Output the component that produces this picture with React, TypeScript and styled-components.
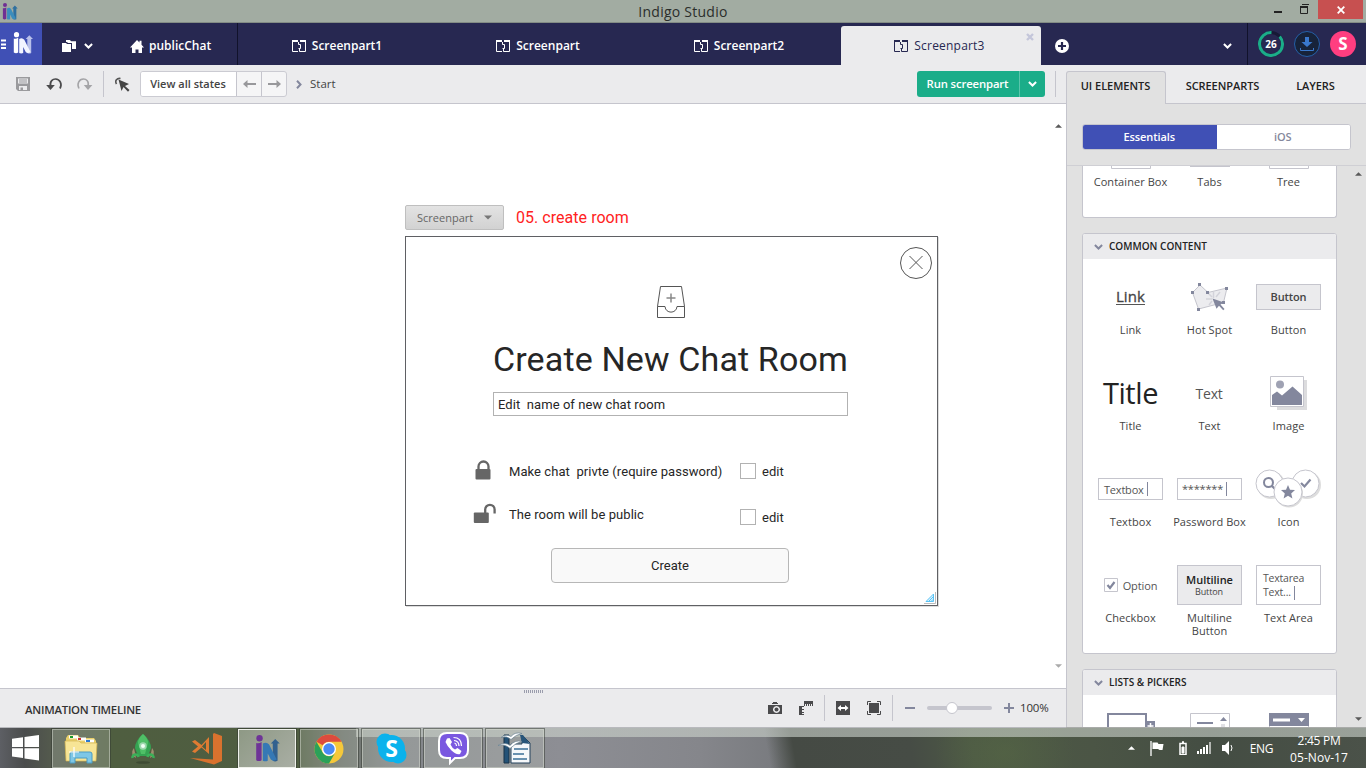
import React from 'react';
import styled, { createGlobalStyle, css } from 'styled-components';

const Global = createGlobalStyle`
  * { box-sizing: border-box; }
  body { margin: 0; overflow: hidden; }
  svg { display: block; flex: none; }
  button { font: inherit; color: inherit; padding: 0; margin: 0; }
`;

const ui = `'Open Sans', 'Noto Sans', sans-serif`;
const navy = '#272851';
const line = '#c5c5cd';
const slate = '#83879d';

const Desktop = styled.div`
  width: 1366px;
  height: 768px;
  display: flex;
  flex-direction: column;
  font: 11px/13px ${ui};
  color: #444;
  background: #fff;
  overflow: hidden;
`;

/* ---------- window title ---------- */
const TitleBar = styled.header`
  height: 23px;
  flex: none;
  display: grid;
  grid-template-columns: 1fr auto 1fr;
  background: #a2aca2;
  border-bottom: 1px solid #838c85;
`;
const AppMark = styled.div`
  padding: 3px 0 0 2px;
`;
const WindowTitle = styled.div`
  font-size: 14px;
  line-height: 23px;
  letter-spacing: 0.25px;
  color: #2b2e2b;
`;
const WindowButtons = styled.div`
  display: flex;
  justify-content: flex-end;
  padding-right: 3px;
`;
const CloseWindow = styled.div`
  width: 45px;
  height: 19px;
  margin-left: 9px;
  background: #c75050;
  display: grid;
  place-items: center;
`;

/* ---------- navigation ---------- */
const Nav = styled.nav`
  height: 42px;
  flex: none;
  display: flex;
  background: ${navy};
  color: #fff;
  font-weight: 600;
  font-size: 12px;
  line-height: 16px;
`;
const LogoBox = styled.div`
  width: 42px;
  background: #4050b5;
  display: flex;
  padding: 9px 0 0 1px;
`;
const Home = styled.div`
  width: 196px;
  border-right: 1px solid #11122b;
  display: flex;
  align-items: center;
  padding: 4px 0 0 20px;
`;
const HomeName = styled.span`
  margin-left: 5px;
`;
const NavTab = styled.div<{ $active?: boolean }>`
  position: relative;
  width: 201px;
  display: flex;
  align-items: center;
  justify-content: center;
  gap: 6px;
  padding: 3px 3px 0 0;
  ${p => p.$active && css`
    width: 200px;
    margin-top: 3px;
    padding-top: 0;
    background: #ebebed;
    color: ${navy};
    font-weight: 400;
    letter-spacing: 0.2px;
    border-radius: 3px 3px 0 0;
  `}
`;
const TabClose = styled.span`
  position: absolute;
  right: 7px;
  top: 7px;
`;
const NavTail = styled.div`
  flex: 1;
  display: flex;
  justify-content: space-between;
  align-items: center;
  padding: 3px 15px 0 14px;
  border-right: 1px solid #11122b;
`;
const Account = styled.div`
  width: 118px;
  display: flex;
  align-items: center;
  gap: 10px;
  padding-left: 10px;
`;
const Avatar = styled.div`
  width: 26px;
  height: 26px;
  border-radius: 50%;
  background: #ff3e80;
  font: 700 17px/26px ${ui};
  text-align: center;
`;

/* ---------- work area ---------- */
const Work = styled.div`
  height: 663px;
  flex: none;
  display: flex;
`;
const Editor = styled.main`
  width: 1066px;
  display: flex;
  flex-direction: column;
`;
const Toolbar = styled.div`
  height: 39px;
  flex: none;
  display: flex;
  align-items: center;
  background: #ebebed;
  border-bottom: 1px solid ${line};
  padding: 0 10px 0 15px;
`;
const Divider = styled.i<{ $l: number; $r: number }>`
  width: 1px;
  height: 26px;
  background: ${line};
  margin: 0 ${p => p.$r}px 0 ${p => p.$l}px;
`;
const StateGroup = styled.div`
  display: flex;
  height: 26px;
  margin-left: 10px;
  border: 1px solid #cbcbd2;
  border-radius: 3px;
  background: #f5f5f6;
  overflow: hidden;
`;
const ViewStates = styled.button`
  width: 95px;
  border: 0;
  padding: 0 1px 2px 0;
  background: #fff;
  font-weight: 600;
`;
const Step = styled.span`
  width: 25px;
  border-left: 1px solid ${line};
  display: grid;
  place-items: center;
`;
const Start = styled.span`
  margin: 0 0 2px 8px;
  font-size: 11.500px;
`;
const RunGroup = styled.div`
  margin-left: auto;
  display: flex;
  width: 128px;
  height: 26px;
  border-radius: 3px;
  background: #1bad89;
  color: #fff;
`;
const Run = styled.button`
  width: 102px;
  border: 0;
  padding: 0 1px 2px 0;
  background: none;
  font-weight: 600;
  font-size: 11.3px;
  letter-spacing: -0.12px;
`;
const RunMenu = styled.span`
  flex: 1;
  border-left: 1px solid #5bc5ac;
  display: grid;
  place-items: center;
`;

/* ---------- canvas ---------- */
const Canvas = styled.section`
  flex: 1;
  position: relative;
  background: #fff;
  padding: 101px 0 0 405px;
`;
const EdgeArrow = styled.span<{ $bottom?: boolean }>`
  position: absolute;
  right: 4px;
  ${p => (p.$bottom ? 'bottom: 20px;' : 'top: 20px;')}
`;
const BoardHead = styled.div`
  display: flex;
  align-items: center;
  height: 25px;
  margin-bottom: 6px;
`;
const BoardType = styled.div`
  width: 99px;
  height: 25px;
  display: flex;
  align-items: center;
  gap: 11px;
  padding: 0 0 1px 11px;
  border: 1px solid #bfbfbf;
  border-radius: 2px;
  background: linear-gradient(#e3e3e3, #d2d2d2);
  color: #666;
`;
const BoardName = styled.span`
  margin-left: 12px;
  font: 16px/20px Roboto, sans-serif;
  color: #f22;
  letter-spacing: 0.04px;
`;
const Board = styled.div`
  position: relative;
  width: 533px;
  height: 370px;
  border: 1px solid #5f6064;
  box-shadow: 1px 1px 0 #ddd;
  display: flex;
  flex-direction: column;
  padding: 49px 0 0 67px;
  font: 13px/16px Roboto, sans-serif;
  letter-spacing: 0.06px;
  color: #262626;
`;
const CloseDialog = styled.span`
  position: absolute;
  right: 5px;
  top: 10px;
`;
const ResizeGrip = styled.span`
  position: absolute;
  right: 1px;
  bottom: 1px;
`;
const InboxMark = styled.div`
  margin-left: 184px;
`;
const Heading = styled.h1`
  margin: 20px 0 12px 20px;
  font: 400 34px/42px Roboto, sans-serif;
  letter-spacing: 0.14px;
  white-space: nowrap;
`;
const RoomInput = styled.div`
  width: 355px;
  height: 24px;
  margin-left: 20px;
  border: 1px solid #b2b2b2;
  padding: 4px;
  white-space: pre;
`;
const Choices = styled.div`
  margin-top: 43px;
  display: flex;
  flex-direction: column;
  gap: 19px;
`;
const Choice = styled.div`
  display: grid;
  grid-template-columns: 36px 231px auto;
  align-items: center;
  height: 24px;
  white-space: pre;
`;
const ChoiceText = styled.span`
  padding-top: 2px;
`;
const Tick = styled.label<{ $drop?: number }>`
  display: flex;
  align-items: center;
  gap: 6px;
  padding-top: ${p => p.$drop || 0}px;
`;
const Box = styled.i`
  width: 16px;
  height: 16px;
  border: 1px solid #b2b2b2;
`;
const TickText = styled.span`
  padding-top: 1px;
`;
const CreateButton = styled.button`
  width: 238px;
  height: 35px;
  margin: 22px 0 0 78px;
  border: 1px solid #b7b7b7;
  border-radius: 4px;
  background: #f9f9f9;
`;

/* ---------- timeline ---------- */
const Timeline = styled.footer`
  position: relative;
  height: 40px;
  flex: none;
  display: flex;
  align-items: center;
  border-top: 1px solid ${line};
  border-bottom: 1px solid #b8b9bd;
  background: #ebebed;
  padding-left: 25px;
  color: #333;
`;
const TimelineName = styled.span`
  padding-top: 2px;
  margin-right: auto;
  font-weight: 600;
  font-size: 11.4px;
  letter-spacing: -0.25px;
`;
const Grip = styled.i`
  position: absolute;
  left: 524px;
  top: 1px;
  width: 20px;
  height: 3px;
  background: repeating-linear-gradient(90deg, #9a9cac 0 1px, transparent 1px 2px);
`;
const Zoom = styled.div`
  display: flex;
  align-items: center;
  width: 161px;
`;
const Track = styled.i`
  position: relative;
  width: 65px;
  height: 4px;
  margin: 0 12px;
  border-radius: 2px;
  background: #c5c5cd;
`;
const Knob = styled.i`
  position: absolute;
  left: 19px;
  top: -4px;
  width: 12px;
  height: 12px;
  border-radius: 50%;
  border: 1px solid #c5c5cd;
  background: #fff;
`;
const Percent = styled.span`
  margin: 0 0 2px 6px;
  font-size: 11.5px;
  letter-spacing: -0.2px;
`;

/* ---------- right panel ---------- */
const Panel = styled.aside`
  width: 300px;
  display: flex;
  flex-direction: column;
  background: #e1e1e1;
  border-bottom: 1px solid #a9aba9;
`;
const PanelTabs = styled.div`
  height: 39px;
  flex: none;
  display: flex;
  align-items: flex-end;
  background: #ebebed;
  box-shadow: inset 0 -1px ${line};
  color: #222;
  font-weight: 600;
`;
const PanelTab = styled.div<{ $w: number; $active?: boolean; $sp?: number }>`
  width: ${p => p.$w}px;
  height: 33px;
  line-height: 29px;
  padding-right: 1px;
  text-align: center;
  letter-spacing: ${p => p.$sp || 0}px;
  ${p => p.$active && css`
    line-height: 27px;
    background: #e1e1e1;
    border: 1px solid ${line};
    border-bottom: 0;
    border-radius: 3px 3px 0 0;
  `}
`;
const PanelBody = styled.div`
  flex: 1;
  min-height: 0;
  display: flex;
  flex-direction: column;
  border-left: 1px solid ${line};
`;
const Library = styled.div`
  height: 62px;
  flex: none;
  padding: 20px 15px 0;
  border-bottom: 1px solid #cfcfd4;
`;
const Segmented = styled.div`
  display: flex;
  height: 26px;
  border: 1px solid ${line};
  border-radius: 3px;
  overflow: hidden;
  background: #fff;
`;
const Segment = styled.span<{ $on?: boolean }>`
  flex: 1;
  text-align: center;
  line-height: 24px;
  padding-right: 1px;
  font-weight: 600;
  letter-spacing: -0.1px;
  color: ${p => (p.$on ? '#fff' : '#85889c')};
  background: ${p => (p.$on ? '#4050b5' : '#fff')};
`;
const Shelf = styled.div`
  position: relative;
  flex: 1;
  min-height: 0;
  overflow: hidden;
  padding-left: 15px;
`;
const ShelfArrow = styled.span<{ $bottom?: boolean }>`
  position: absolute;
  right: 4px;
  ${p => (p.$bottom ? 'bottom: 6px;' : 'top: 6px;')}
`;
const Card = styled.section<{ $h: number; $clipped?: boolean }>`
  width: 255px;
  height: ${p => p.$h}px;
  margin-bottom: 15px;
  background: #fff;
  border: 1px solid ${line};
  border-radius: 3px;
  overflow: hidden;
  ${p => p.$clipped && css`
    border-top: 0;
    border-radius: 0 0 3px 3px;
  `}
`;
const CardHead = styled.h2`
  height: 25px;
  margin: 0;
  display: flex;
  align-items: center;
  gap: 6px;
  padding-left: 11px;
  background: #ebebed;
  font-size: 10px;
  font-weight: 600;
  letter-spacing: 0.02px;
  color: #222;
`;
const Items = styled.div`
  display: grid;
  grid-template-columns: repeat(3, 79px);
  padding-left: 8px;
`;
const Item = styled.div<{ $h?: number }>`
  height: ${p => p.$h || 96}px;
  display: flex;
  flex-direction: column;
  align-items: center;
  text-align: center;
`;
const Thumb = styled.div<{ $h?: number; $top?: number }>`
  height: ${p => p.$h || 48}px;
  margin: ${p => (p.$top === undefined ? 14 : p.$top)}px 0 2px;
  display: flex;
  align-items: center;
  justify-content: center;
`;
const Label = styled.span`
  font-size: 11px;
  line-height: 13px;
  letter-spacing: 0.06px;
`;
const LowLabel = styled(Label)`
  margin-top: 4px;
`;
const LinkSample = styled.span`
  margin-bottom: 1px;
  font-size: 15px;
  line-height: 16px;
  letter-spacing: 0.1px;
  color: #444;
  -webkit-text-stroke: 0.3px #444;
  border-bottom: 1px solid #555;
`;
const ButtonSample = styled.span<{ $h: number }>`
  width: 65px;
  height: ${p => p.$h}px;
  display: flex;
  flex-direction: column;
  justify-content: center;
  border: 1px solid ${line};
  background: #ebebed;
  font-weight: 600;
  line-height: 12px;
  letter-spacing: -0.12px;
  small { font-size: 9px; font-weight: 400; line-height: 11px; padding-right: 1px; }
`;
const Strong = styled.b`
  color: #222;
  font-weight: 600;
  letter-spacing: -0.02px;
`;
const TitleSample = styled.span`
  font-size: 29px;
  line-height: 30px;
  letter-spacing: -0.4px;
  color: #222;
`;
const TextSample = styled.span`
  font-size: 14px;
  letter-spacing: -0.2px;
  padding-right: 1px;
  color: #555;
`;
const FieldSample = styled.span<{ $h: number }>`
  width: 65px;
  height: ${p => p.$h}px;
  display: flex;
  align-items: center;
  padding-left: 5px;
  border: 1px solid ${line};
  text-align: left;
  color: #555;
  letter-spacing: -0.2px;
  white-space: nowrap;
`;
const Stars = styled.span`
  padding-bottom: 2px;
  margin-left: -1px;
`;
const Area = styled.span`
  font-size: 10.5px;
  line-height: 14px;
  padding: 1px 0 0 1px;
`;
const Caret = styled.i`
  display: inline-block;
  width: 1px;
  height: 14px;
  margin-left: 3px;
  background: ${slate};
  vertical-align: middle;
`;
const OptionSample = styled.span`
  display: flex;
  align-items: center;
  gap: 5px;
  color: #555;
  letter-spacing: -0.1px;
`;

/* ---------- taskbar ---------- */
const Taskbar = styled.div`
  height: 40px;
  flex: none;
  display: flex;
  background:
    linear-gradient(rgba(205, 212, 205, 0.6), rgba(205, 212, 205, 0.6)) 356px 0 / 1010px 9px no-repeat,
    radial-gradient(ellipse 70px 60px at 1005px 25px, rgba(88, 108, 68, 0.45), transparent),
    linear-gradient(80deg, transparent 759px, #454a44 785px, #464c45 900px, #4d5945 960px, #4b5545 1080px, #444d43 1200px, #4b5249 1350px),
    linear-gradient(90deg, #5d5f64 0, #4a4c4c 25px, #53594d 50px, #4f5e40 110px, #4f5d41 300px, #6b7169 340px, #83868a 400px, #8d8e94 560px, #85868b 700px, #77797d 790px);
  color: #fff;
`;
const StartButton = styled.div`
  width: 52px;
  padding: 7px 0 0 12px;
`;
const Task = styled.div<{ $mode?: 'open' | 'active' }>`
  width: 58px;
  height: 39px;
  margin: 1px 4px 0 0;
  display: grid;
  place-items: center;
  ${p => p.$mode && css`
    border: 1px solid ${p.$mode === 'active' ? '#eef0ea' : 'rgba(215,220,210,.5)'};
    background: ${p.$mode === 'active'
      ? 'linear-gradient(135deg, #8e9985, #a9aea4)'
      : 'rgba(195,202,190,.28)'};
    box-shadow: 0 0 0 1px rgba(50, 55, 48, 0.5);
  `}
`;
const Tray = styled.div`
  margin-left: auto;
  display: flex;
  align-items: center;
  font-size: 12px;
  padding-right: 18px;
`;
const Language = styled.span`
  margin: 0 17px 0 16px;
  letter-spacing: -0.4px;
`;
const Clock = styled.div`
  width: 58px;
  padding-top: 2px;
  text-align: center;
  line-height: 17px;
  letter-spacing: -0.3px;
  white-space: nowrap;
`;
const DateText = styled.span`
  letter-spacing: 0.05px;
`;

/* ---------- drawings ---------- */
const Chevron = ({ w = 10, h = 6, c = '#fff', sw = 2.2 }: { w?: number; h?: number; c?: string; sw?: number }) => (
  <svg width={w} height={h} viewBox="0 0 10 6" fill="none" stroke={c} strokeWidth={sw}>
    <path d="M1 .8 5 4.7 9 .8" />
  </svg>
);
const Triangle = ({ up, c = '#5a5a5a', w = 7, h = 4 }: { up?: boolean; c?: string; w?: number; h?: number }) => (
  <svg width={w} height={h} viewBox="0 0 8 4" fill={c}>
    <path d={up ? 'M0 4 4 0 8 4z' : 'M0 0h8L4 4z'} />
  </svg>
);
const IndigoMark = ({ w, h, a, b, c }: { w: number; h: number; a: string; b: string; c: string }) => (
  <svg width={w} height={h} viewBox="0 0 20 22" fill="none">
    <path d="M.8 6.500q2 .8 4.400-.8V20.500q-2.200 1.500-4.400 0z" fill={a} />
    <circle cx="3.500" cy="2.700" r="2.600" fill={a} />
    <path d="M14.300 21V7h-1.600L16.300 3.300 20 7h-1.800v14q-2 1-3.900 0z" fill={c} />
    <path d="M6.200 7q3-1.800 5.100.8L17.500 20q-3 1.800-4.800 0L10.200 15V21q-2 .9-4 0z" fill={b} />
  </svg>
);
const PartIcon = ({ c = '#fff' }: { c?: string }) => (
  <svg width="14" height="12" viewBox="0 0 14 12" fill="none" stroke={c}>
    <path d="M0 1h6M8 1h6" strokeWidth="2" />
    <path d="M.5 1v10.500H6M13.500 1v10.500H7.500V8.500M6.500 2v2.500h2v4h-2" />
  </svg>
);
const HotSpot = () => (
  <svg width="38" height="29" viewBox="0 0 38 29">
    <path d="M1.500 9.500 9 2l8 7.500L36 5l-3.500 14.500L7.500 26z" fill="#ececef" stroke={line} />
    <path d="M22.500 9v6M15 16h6M29 9l-4 5M17 10l4 4M18 22l3-4" stroke="#d3d3da" strokeWidth="1.500" />
    <g fill={slate}>
      <path d="M0 8h3v3H0zM7 0h3v3H7zM15 8h3v3h-3zM34 4h3v3h-3zM31 18h3v3h-3zM6 25h3v3H6z" />
      <path d="M21.500 15.500 33 19.500l-3.500 2 4 4.500-1.300 1.200-4.200-4.500-2.500 3z" />
    </g>
  </svg>
);
const Picture = () => (
  <svg width="37" height="34" viewBox="0 0 37 34">
    <path d="M7 4h30v30H7z" fill="#dcdcde" />
    <path d="M.5.5h33v30H.5z" fill="#fff" stroke={line} />
    <circle cx="10" cy="8.500" r="4" fill="#9fa2b3" />
    <path d="M2 29V19l5-3.500 5 4 10.500-9L32 19v10z" fill={slate} />
  </svg>
);
const IconTrio = () => (
  <svg width="67" height="40" viewBox="0 0 67 40">
    <g fill="#ddd"><circle cx="16" cy="16" r="14" /><circle cx="52" cy="16" r="14" /></g>
    <g fill="#fff" stroke={line}><circle cx="14.500" cy="14.500" r="13.500" /><circle cx="50.500" cy="14.500" r="13.500" /></g>
    <circle cx="13.500" cy="13.500" r="4.500" fill="none" stroke={slate} strokeWidth="2" />
    <path d="m16.500 16.500 3.500 3.500M46 14l3.500 3.500 6-7" fill="none" stroke={slate} strokeWidth="2.200" />
    <circle cx="34" cy="24.500" r="14" fill="#ddd" />
    <circle cx="33" cy="23" r="14" fill="#fff" stroke={line} />
    <path d="m33 16 2 4.700 5 .4-3.800 3.300 1.200 5-4.400-2.700-4.400 2.700 1.200-5-3.800-3.300 5-.4z" fill={slate} />
  </svg>
);
const Tool = ({ children, w = 14, h = 14, c = '#4a4a4c' }: { children: React.ReactNode; w?: number; h?: number; c?: string }) => (
  <svg width={w} height={h} viewBox={`0 0 ${w} ${h}`} fill={c}>{children}</svg>
);
const Space = styled.i<{ $w: number }>`
  width: ${p => p.$w}px;
  flex: none;
`;

const LabeledItem = ({ name, children }: { name: string; children: React.ReactNode }) => (
  <Item><Thumb>{children}</Thumb><Label>{name}</Label></Item>
);

function Navigation() {
  return (
    <Nav>
      <LogoBox>
        <svg width="12" height="24"><path d="M0 8.500h5M0 12.500h5M0 16h5" stroke="#fff" strokeWidth="2" /></svg>
        <IndigoMark w={20} h={22} a="#fff" b="#f2f4ff" c="#b8c0ea" />
      </LogoBox>
      <Home>
        <svg width="14" height="12" fill="#fff"><path d="M0 3h4l1 1h4v8H0z" /><path d="M4 0h4l1 1.200h5V9h-4V3H6L5 2H4z" /></svg>
        <Space $w={8} /><Chevron w={9} /><Space $w={37} />
        <svg width="14" height="13" fill="#fff"><path d="M0 7.500 7 0l2.500 2.600V.8h2v4L14 7.500h-2V13H8.500V9.500h-3V13H2V7.500z" /></svg>
        <HomeName>publicChat</HomeName>
      </Home>
      {['Screenpart1', 'Screenpart', 'Screenpart2'].map(t => <NavTab key={t}><PartIcon />{t}</NavTab>)}
      <NavTab $active>
        <PartIcon c={navy} />Screenpart3
        <TabClose><svg width="8" height="8"><path d="m1 1 6 6M7 1 1 7" stroke="#c4c6da" strokeWidth="2.400" /></svg></TabClose>
      </NavTab>
      <NavTail>
        <svg width="14" height="14"><circle cx="7" cy="7" r="7" fill="#fff" /><path d="M7 3v8M3 7h8" stroke={navy} strokeWidth="2.200" /></svg>
        <Chevron w={9} />
      </NavTail>
      <Account>
        <svg width="26" height="26">
          <circle cx="13" cy="13" r="11.500" fill="none" stroke="#171936" strokeWidth="3" />
          <circle cx="13" cy="13" r="11.500" fill="none" stroke="#1bad89" strokeWidth="3" strokeDasharray="62.500 10" transform="rotate(-41 13 13)" />
          <text x="13" y="16.500" textAnchor="middle" fill="#fff" fontSize="10" fontWeight="700" fontFamily="Open Sans">26</text>
        </svg>
        <svg width="26" height="26">
          <circle cx="13" cy="13" r="12.500" fill="#17233a" stroke="#2560a8" />
          <path d="M11 6h4v5h3.500L13 16l-5.500-5H11z" fill="#3a78cc" />
          <path d="M6.500 17v2.500h13V17" fill="none" stroke="#3a78cc" />
        </svg>
        <Avatar>S</Avatar>
      </Account>
    </Nav>
  );
}

function EditorToolbar() {
  return (
    <Toolbar>
      <Tool w={15} c="#9a9a9d"><path fillRule="evenodd" d="M1 0h14v14H3l-2-2zM3 1.500v5h10v-5zM4 9v4h1.500v-2.500H8V13h4V9z" /><path d="M4 2.500h8v1H4zM4 4.500h8v1H4z" /></Tool>
      <Space $w={16} />
      <svg width="17" height="13" fill="none" stroke="#4a4a4c" strokeWidth="1.700"><path d="M4.500 8.500C3.500 3 7 1 9.500 1c4.500 0 7 5 4.500 9.500" /><path d="M.2 7h8.600L4.500 12z" fill="#4a4a4c" stroke="none" /></svg>
      <Space $w={13} />
      <svg width="17" height="13" fill="none" stroke="#a4a4a7" strokeWidth="1.500"><path d="M12 8.500C13.500 3 10 1 7.500 1 3 1 .5 6 3 10.500" /><path d="M7.800 7h8.600L12 12z" fill="#a4a4a7" stroke="none" /></svg>
      <Divider $l={10} $r={11} />
      <svg width="15" height="15"><path d="M3.500 2.500 14 7l-4 2 4.500 4-1.500 1.700L8.500 10 6.500 14z" fill="#444" /><path d="M1.500 7C-.5 3.500 2 1 5.500 1.500" fill="none" stroke="#555" strokeWidth="1.600" /></svg>
      <StateGroup>
        <ViewStates>View all states</ViewStates>
        <Step><svg width="13" height="8"><path d="M0 4 4.500 0v3H13v2H4.500v3z" fill="#98989b" /></svg></Step>
        <Step><svg width="13" height="8"><path d="M13 4 8.500 0v3H0v2h8.500v3z" fill="#98989b" /></svg></Step>
      </StateGroup>
      <Space $w={9} />
      <svg width="6" height="9" fill="none" stroke={slate} strokeWidth="2"><path d="m1 .8 3.500 3.700L1 8.200" /></svg>
      <Start>Start</Start>
      <RunGroup><Run>Run screenpart</Run><RunMenu><Chevron w={9} /></RunMenu></RunGroup>
      <Divider $l={10} $r={0} />
    </Toolbar>
  );
}

function RoomBoard() {
  return (
    <Board>
      <CloseDialog><svg width="32" height="32" fill="none" stroke="#555"><circle cx="16" cy="16" r="15.500" /><path d="m9.500 9 13 13M22.500 9l-13 13" /></svg></CloseDialog>
      <InboxMark><svg width="28" height="32" fill="none" stroke="#555"><path d="M3.500.5h21l3 20v11H.5v-11zM.5 20.500H8c.5 7.500 11.500 7.500 12 0h7.500" /><path d="M14 7.500v9M9.500 12h9" stroke="#888" strokeWidth="1.500" /></svg></InboxMark>
      <Heading>Create New Chat Room</Heading>
      <RoomInput>Edit  name of new chat room</RoomInput>
      <Choices>
        <Choice>
          <svg width="26" height="22"><path d="M5.500 9V6.500a5 5 0 0 1 10 0V9" fill="none" stroke="#666" strokeWidth="2.300" /><rect x="2.500" y="9" width="15" height="10.500" rx="1" fill="#666" /></svg>
          <ChoiceText>{'Make chat  privte (require password)'}</ChoiceText>
          <Tick><Box /><TickText>edit</TickText></Tick>
        </Choice>
        <Choice>
          <svg width="26" height="22"><path d="M12.200 10V6.500a4.700 4.700 0 0 1 9.400 0v4" fill="none" stroke="#666" strokeWidth="2.300" /><rect x=".8" y="9.500" width="15" height="10.500" rx="1" fill="#666" /></svg>
          <ChoiceText>The room will be public</ChoiceText>
          <Tick $drop={6}><Box /><TickText>edit</TickText></Tick>
        </Choice>
      </Choices>
      <CreateButton>Create</CreateButton>
      <ResizeGrip><svg width="12" height="12"><path d="M11.500 0v11.500H0" fill="none" stroke="#bbb" /><path d="M9.500 2v7.500H2z" fill="#d5f0ff" stroke="#5bc4f5" /><path d="m5 9 4-4M7 9.500l2-2" stroke="#5bc4f5" /></svg></ResizeGrip>
    </Board>
  );
}

function AnimationTimeline() {
  return (
    <Timeline>
      <Grip />
      <TimelineName>ANIMATION TIMELINE</TimelineName>
      <Tool w={14} h={12}><path fillRule="evenodd" d="M0 3h14v9H0zM8.500 4a3.500 3.500 0 1 0 .01 0z" /><path d="M5 0h4v1H5zM4 1h6v1H4z" /><circle cx="8.500" cy="7.500" r="2" /></Tool>
      <Space $w={17} />
      <Tool w={14} h={14}><path d="M0 5h5v1H3v2h2v1H3v2h2v1H3v1h2v1H0zM5 0h9v5h-1V3h-1v2h-1V3h-1v2H9V3H8v2H7V3H6v2H5z" /></Tool>
      <Divider $l={11} $r={11} />
      <Tool w={14} h={14}><path d="M0 0h14v14H0z" /><path d="m1.500 7 3.500-3v2h4V4l3.500 3L9 10V8H5v2z" fill="#fff" /></Tool>
      <Space $w={17} />
      <Tool w={14} h={14}><path d="M2 2h10v10H2z" /><path d="M.5 4V.5H4M10 .5h3.500V4M13.500 10v3.500H10M4 13.500H.5V10" fill="none" stroke="#4a4a4c" /></Tool>
      <Divider $l={11} $r={12} />
      <Zoom>
        <svg width="10" height="2"><path d="M0 0h10v2H0z" fill={slate} /></svg>
        <Track><Knob /></Track>
        <svg width="10" height="10"><path d="M5 0v10M0 5h10" stroke={slate} strokeWidth="2" /></svg>
        <Percent>100%</Percent>
      </Zoom>
    </Timeline>
  );
}

function ElementsPanel() {
  return (
    <Panel>
      <PanelTabs>
        <PanelTab $w={100} $active $sp={-0.02}>UI ELEMENTS</PanelTab>
        <PanelTab $w={114} $sp={-0.05}>SCREENPARTS</PanelTab>
        <PanelTab $w={72} $sp={-0.05}>LAYERS</PanelTab>
      </PanelTabs>
      <PanelBody>
        <Library><Segmented><Segment $on>Essentials</Segment><Segment>iOS</Segment></Segmented></Library>
        <Shelf>
          <Card $h={52} $clipped>
            <Items>
              {['Container Box', 'Tabs', 'Tree'].map((t, i) => (
                <Item key={t} $h={50}>
                  <Thumb $h={3} $top={0}><svg width="40" height="3"><path d={i === 1 ? 'M0 .5h40' : 'M.5 0v2.500h39V0'} fill="none" stroke={line} /></svg></Thumb>
                  <LowLabel>{t}</LowLabel>
                </Item>
              ))}
            </Items>
          </Card>
          <Card $h={421}>
            <CardHead><Chevron c={slate} w={9} />COMMON CONTENT</CardHead>
            <Items>
              <LabeledItem name="Link"><LinkSample>Link</LinkSample></LabeledItem>
              <LabeledItem name="Hot Spot"><HotSpot /></LabeledItem>
              <LabeledItem name="Button"><ButtonSample $h={26}>Button</ButtonSample></LabeledItem>
              <LabeledItem name="Title"><TitleSample>Title</TitleSample></LabeledItem>
              <LabeledItem name="Text"><TextSample>Text</TextSample></LabeledItem>
              <LabeledItem name="Image"><Picture /></LabeledItem>
              <LabeledItem name="Textbox"><FieldSample $h={22}>Textbox<Caret /></FieldSample></LabeledItem>
              <LabeledItem name="Password Box"><FieldSample $h={22}><Stars>*******</Stars><Caret /></FieldSample></LabeledItem>
              <LabeledItem name="Icon"><IconTrio /></LabeledItem>
              <LabeledItem name="Checkbox">
                <OptionSample>
                  <svg width="14" height="14" fill="none"><path d="M.5.5h13v13H.5z" stroke={line} /><path d="m3.500 7 2.500 3 4.500-6" stroke={slate} strokeWidth="2.200" /></svg>
                  Option
                </OptionSample>
              </LabeledItem>
              <LabeledItem name="Multiline Button"><ButtonSample $h={40}><Strong>Multiline</Strong><small>Button</small></ButtonSample></LabeledItem>
              <LabeledItem name="Text Area"><FieldSample $h={40}><Area>Textarea<br />Text...<Caret /></Area></FieldSample></LabeledItem>
            </Items>
          </Card>
          <Card $h={90}>
            <CardHead><Chevron c={slate} w={9} />LISTS &amp; PICKERS</CardHead>
            <Items>
              <Item><Thumb $top={18} $h={40}><svg width="50" height="40"><path d="M2 30V1h38v29" fill="none" stroke={slate} strokeWidth="2" /><path d="M39 8h10v10H39z" fill={slate} /><path d="M44.500 10v6M41.500 13h6" stroke="#fff" strokeWidth="1.500" /></svg></Thumb></Item>
              <Item><Thumb $top={18} $h={40}><svg width="40" height="40"><path d="M.5 40V.5h39V40" fill="none" stroke={line} /><path d="M7 10h16" stroke={slate} strokeWidth="2" /><path d="m30 8 3.500-4L37 8z" fill={slate} /><path d="M31 11h4v10h-4z" fill="#e1e1e5" /></svg></Thumb></Item>
              <Item><Thumb $top={18} $h={40}><svg width="40" height="40"><path d="M.5 40V.5h39V40" fill="none" stroke={line} /><path d="M0 0h40v13H0z" fill={slate} /><path d="M4 7h17" stroke="#fff" strokeWidth="3" /><path d="M29 5h7l-3.500 4z" fill="#fff" /></svg></Thumb></Item>
            </Items>
          </Card>
          <ShelfArrow><Triangle up /></ShelfArrow>
          <ShelfArrow $bottom><Triangle /></ShelfArrow>
        </Shelf>
      </PanelBody>
    </Panel>
  );
}

function WindowsTaskbar() {
  return (
    <Taskbar>
      <StartButton><svg width="27" height="26" fill="#fff"><path d="M0 3.800 11 2.200V12H0zM12.500 2 27 0v12H12.500zM0 13.300h11v9.800L0 21.500zM12.500 13.300H27V25.500l-14.500-2z" /></svg></StartButton>
      <Task $mode="open">
        <svg width="34" height="30">
          <path d="M2 4 4 1h10l2 3h14l2 3v19H2z" fill="#e8cf6a" />
          <path d="M5 1.500h9v3H5z" fill="#fff" /><path d="M6 2h3v2H6z" fill="#1a9b2c" />
          <path d="M13 3.500h9v3h-9z" fill="#fff" /><path d="M14 4h3v2h-3z" fill="#d0312d" />
          <path d="M21 5.500h9v3h-9z" fill="#fff" /><path d="M22 6h4v2h-4z" fill="#2c79d0" />
          <path d="M1 7h14l2 2h16l-1 18H2z" fill="#f7e596" stroke="#d4b550" strokeWidth=".7" />
          <path d="M6 29V20q0-2 2-2h18q2 0 2 2v9h-5v-5H11v5z" fill="#7ec7e6" stroke="#4a9cc4" />
          <path d="M10 13v10M5 18h10" stroke="#fff" strokeWidth="1.200" />
        </svg>
      </Task>
      <Task>
        <svg width="26" height="30">
          <ellipse cx="13" cy="28.500" rx="7" ry="1.300" fill="#3f4c34" />
          <path d="M4 14q-3 3-1 8l3 2zM22 14q3 3 1 8l-3 2z" fill="#a08f70" />
          <path d="M13 0q8 7 8 14l-3 8H8l-3-8Q5 7 13 0z" fill="#35a352" />
          <path d="M13 0q5 4 5 9l-3 11h-4L8 9q0-5 5-9z" fill="#4fbf66" />
          <circle cx="13" cy="12" r="3.700" fill="#9ed8ae" /><circle cx="13" cy="12" r="2" fill="#f0fff4" />
          <path d="M2.500 24a3 3 0 0 1 6-1M23.500 24a3 3 0 0 0-6-1" fill="none" stroke="#3bb058" strokeWidth="2.500" />
        </svg>
      </Task>
      <Task>
        <svg width="33" height="33">
          <path d="M24 2 25 1l8 3v25l-8 3.500L1 26l23 1.500z" fill="#d9722e" />
          <path d="M3 9.500 6 8l6.500 5L20 5v17l-7.500-6.500L6 21l-3-1.500 6-5zM17 10l-4 4.500L17 18z" fill="#e07b32" fillRule="evenodd" />
        </svg>
      </Task>
      <Task $mode="active"><IndigoMark w={25} h={27} a="#6e3497" b="#3578b5" c="#32618f" /></Task>
      <Task $mode="open">
        <svg width="30" height="30" viewBox="-15 -15 30 30">
          <circle r="14.500" fill="#f5c83a" />
          <path d="M-12.560-7.250A14.500 14.500 0 0 1 12.560-7.250H0a7.250 7.250 0 0 0-6.280 3.620z" fill="#dd4b3e" />
          <path d="M-12.560-7.250A14.500 14.500 0 0 0 0 14.500L6.280 3.620A7.250 7.250 0 0 1-6.280 3.620z" fill="#2ba159" />
          <circle r="7" fill="#fff" /><circle r="5.700" fill="#4a8af4" />
        </svg>
      </Task>
      <Task $mode="open">
        <svg width="31" height="31">
          <circle cx="9" cy="9" r="8.500" fill="#0bb2ec" /><circle cx="22" cy="22" r="8.500" fill="#0bb2ec" /><circle cx="15.500" cy="15.500" r="13.500" fill="#0bb2ec" />
          <text x="15.500" y="23.500" textAnchor="middle" fill="#fff" fontSize="23" fontWeight="700" fontFamily="Open Sans">S</text>
        </svg>
      </Task>
      <Task $mode="open">
        <svg width="31" height="33">
          <path d="M9 1h13q8 0 8 8v9q0 8-8 8h-5l-5 5v-5H9q-8 0-8-8V9q0-8 8-8z" fill="#7a58e0" stroke="#fff" strokeWidth="2" />
          <path d="M9 6.500 11.500 6l2.500 4-1.500 2.500q1.500 3.500 4.500 5l2.500-1.500 4 3-1.500 3q-4 1-8.500-3.500T7.500 10z" fill="#fff" />
          <path d="M15.500 5.500q8 0 8 8.500M16 8.500q5 .5 5 5.500M16.500 11q2 .5 2 3" fill="none" stroke="#fff" strokeWidth="1.200" />
        </svg>
      </Task>
      <Task $mode="open">
        <svg width="34" height="34">
          <path d="M6 3h5v28H6z" fill="#245277" stroke="#183349" />
          <path d="M13 12h11V3l8 8v20H13z" fill="#f6f8fa" stroke="#25435c" />
          <path d="M22 3h3l7 9-8-1z" fill="#285579" />
          <path d="M16 17h14M15 22h11M15 27h14" stroke="#3b6f96" strokeWidth="1.700" />
          <path d="M3 5.500q5-4 10-1 4-5 11-3-6 1-11 6-4-4-10-2zM0 13.500q7-4 12 0 5-6 12-4-6 1-12 7-5-5-12-3z" fill="#fff" stroke="#6c8494" strokeWidth=".7" />
        </svg>
      </Task>
      <Tray>
        <Triangle up c="#fff" />
        <Space $w={15} />
        <svg width="15" height="15"><path d="M1 0v15" stroke="#fff" strokeWidth="1.300" /><path d="M2.500 1.500h5l1 1.500h5l-1 6h-3L8 8H2.500z" fill="#fff" /></svg>
        <Space $w={14} />
        <svg width="8" height="14" fill="none" stroke="#fff"><path d="M1 2.500h6v11H1zM3 1h2" strokeWidth="1.500" /><path d="M3 6h2v6H3z" fill="#fff" /></svg>
        <Space $w={10} />
        <svg width="14" height="12" fill="#fff"><path d="M0 9h2v3H0zM3 7h2v5H3zM6 5h2v7H6zM9 3h2v9H9z" /><path d="M12 0h2v12h-2z" opacity=".6" /></svg>
        <Space $w={10} />
        <svg width="13" height="14"><path d="M1 4h3l4-4v14l-4-4H1z" fill="#fff" /><path d="M10 4q2 3 0 6" fill="none" stroke="#fff" /></svg>
        <Language>ENG</Language>
        <Clock>2:45 PM<br /><DateText>05-Nov-17</DateText></Clock>
      </Tray>
    </Taskbar>
  );
}

export default function App() {
  return (
    <Desktop>
      <Global />
      <TitleBar>
        <AppMark><IndigoMark w={16} h={17} a="#702f93" b="#3b8dbd" c="#2f70a0" /></AppMark>
        <WindowTitle>Indigo Studio</WindowTitle>
        <WindowButtons>
          <svg width="36" height="20"><path d="M1 11h8v2H1z" fill="#222" /><path d="M27.500 6.500h7v7h-7zM29 4.500h7.500V12" fill="none" stroke="#222" /><path d="M27 7h8" stroke="#222" strokeWidth="2" /></svg>
          <CloseWindow><svg width="8" height="8"><path d="m.7.700 6.600 6.600M7.300.700.700 7.300" stroke="#fff" strokeWidth="1.800" /></svg></CloseWindow>
        </WindowButtons>
      </TitleBar>
      <Navigation />
      <Work>
        <Editor>
          <EditorToolbar />
          <Canvas>
            <EdgeArrow><Triangle up /></EdgeArrow>
            <BoardHead>
              <BoardType>Screenpart<Triangle w={8} h={5} c="#777" /></BoardType>
              <BoardName>05. create room</BoardName>
            </BoardHead>
            <RoomBoard />
            <EdgeArrow $bottom><Triangle c="#aaa" /></EdgeArrow>
          </Canvas>
          <AnimationTimeline />
        </Editor>
        <ElementsPanel />
      </Work>
      <WindowsTaskbar />
    </Desktop>
  );
}
